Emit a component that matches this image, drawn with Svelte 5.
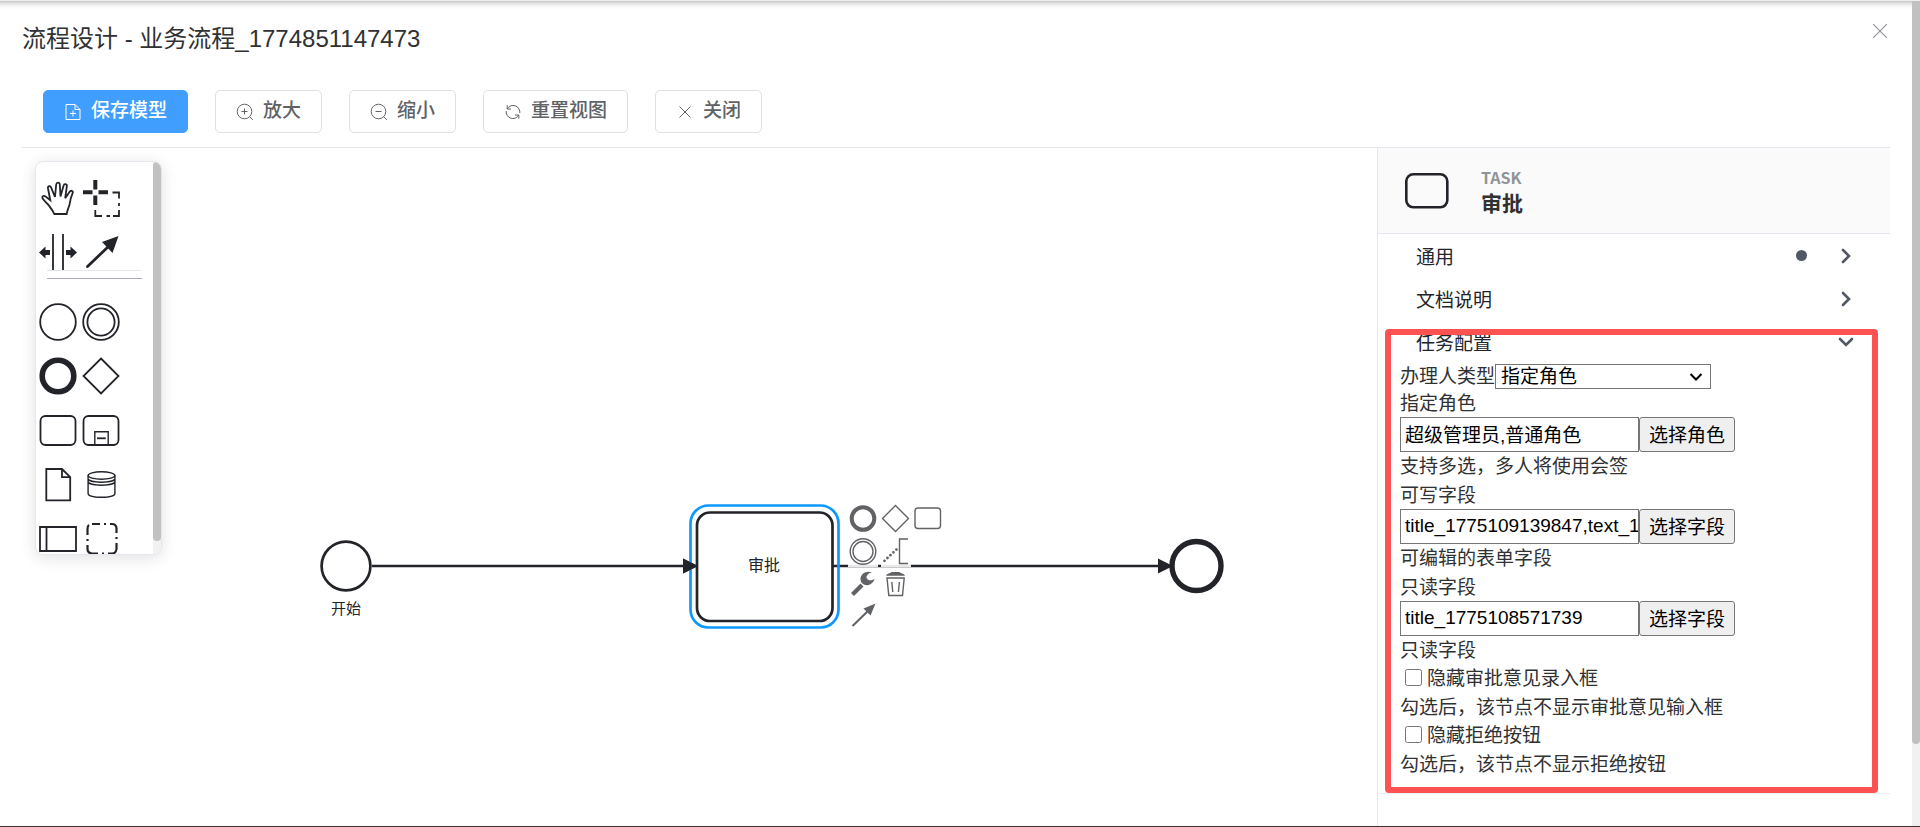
<script lang="ts">
    let assigneeType = $state('role');
    let roles = $state('超级管理员,普通角色');
    let writable = $state('title_1775109139847,text_1775109140522');
    let readonlyFields = $state('title_1775108571739');
    let hideComment = $state(false);
    let hideReject = $state(false);

    const scrollRatio = 90;

    const groups = [
        { title: '通用', edited: true },
        { title: '文档说明', edited: false }
    ];
</script>

<!-- Palette glyphs, all on a 38 x 38 grid -->
{#snippet glyph(name: string)}
    <svg viewBox="0 0 38 38" aria-hidden="true">
        {#if name === 'hand'}
            <path
                d="M15.3 35 C13.5 31 11 28 9.5 26 C7.5 24 4.5 21 3.4 19 C2.8 17 4.8 16.2 6.5 17.4 L11.3 21.3 L9 9.5 C8.6 6.8 11.4 6.2 12.2 8.6 L16 18 L17.2 5.5 C17.5 3 20.6 3 20.8 5.5 L21.5 17.5 L24.6 6.5 C25.3 4.4 28.2 4.9 27.8 7.4 L26.2 19.2 L30.8 12.6 C32.2 10.9 34.6 12 33.6 14.2 C32 18 31 22 30.4 26 C29.6 29 28.2 31 27.7 35 Z"
            />
        {:else if name === 'lasso'}
            <path class="thick" d="M1 13.3 H10.5 M16.5 13.3 H26 M13.3 1 V10.5 M13.3 16.5 V26" />
            <path d="M30.5 13.5 H37 V19.5 M37 24 V27 M37 31 V37 H31 M28 37 H24.5 M20 37 H13.3 V31" />
        {:else if name === 'space'}
            <path d="M14 1 V38 M24 1 V38" />
            <path class="solid" d="M0 19.5 L6.5 13.5 V17 H11 V22 H6.5 V25.5 Z M38 19.5 L31.5 13.5 V17 H27 V22 H31.5 V25.5 Z" />
        {:else if name === 'connect'}
            <path class="medium" d="M5.5 33.5 L28 12" />
            <path class="solid" d="M36.5 3 L20 9 L30.5 20 Z" />
        {:else if name === 'start'}
            <circle cx="19" cy="19" r="17.8" />
        {:else if name === 'intermediate'}
            <circle cx="19" cy="19" r="17.8" />
            <circle cx="19" cy="19" r="13.6" />
        {:else if name === 'end'}
            <circle class="heavy" cx="19" cy="19" r="15.8" />
        {:else if name === 'gateway'}
            <path d="M19 1.5 L36.5 19 L19 36.5 L1.5 19 Z" />
        {:else if name === 'task'}
            <rect x="1.5" y="5" width="35" height="29" rx="5" />
        {:else if name === 'subprocess'}
            <rect x="1.5" y="5" width="35" height="29" rx="5" />
            <path class="fine" d="M12.8 34 V20.8 H26.2 V34" />
            <path d="M15 27.3 H23.8" />
        {:else if name === 'data-object'}
            <path d="M7.3 4 H23 L31.2 12.2 V35.3 H7.3 Z M23 4 V12.2 H31.2" />
        {:else if name === 'data-store'}
            <g class="fine">
                <ellipse cx="19.5" cy="10.5" rx="13.4" ry="3.7" />
                <path
                    d="M6.1 10.5 V28.5 C6.1 33.5 32.9 33.5 32.9 28.5 V10.5 M6.1 13.5 C6.1 18.4 32.9 18.4 32.9 13.5 M6.1 16.5 C6.1 21.4 32.9 21.4 32.9 16.5"
                />
            </g>
        {:else if name === 'participant'}
            <path d="M1 8 H37 V32 H1 Z M7.5 8 V32" />
        {:else if name === 'group'}
            <path
                class="thicker"
                d="M10 5 H18 M22 5 H24 M28 5 H30 Q34 5 34.5 9 V14 M34.5 18 V20 M34.5 24 V30 Q34 34.5 30 34.5 H26 M22 34.5 H20 M16 34.5 H10 Q5.5 34 5.5 30 V26 M5.5 22 V20 M5.5 16 V10 Q5.5 7 7 6"
            />
        {/if}
    </svg>
{/snippet}

<div class="page">
    <main class="dialog">
        <header class="dialog-header">
            <h1>流程设计 - 业务流程_1774851147473</h1>
            <button class="dialog-close" aria-label="关闭对话框">
                <svg viewBox="0 0 14 14"><path d="M1 1 L13 13 M13 1 L1 13" /></svg>
            </button>
        </header>

        <div class="toolbar">
            <button class="btn primary">
                <svg viewBox="0 0 18 18">
                    <path d="M2 1.5 H11 L16 6.5 V16.5 H2 Z M11 1.5 V6.5 H16 M9 7.5 V13.5 M6 10.5 H12" />
                </svg>
                <span>保存模型</span>
            </button>
            <button class="btn">
                <svg viewBox="0 0 18 18">
                    <circle cx="8.5" cy="8.5" r="7.3" />
                    <path d="M8.5 5.5 V11.5 M5.5 8.5 H11.5 M13.8 13.8 L16.8 16.8" />
                </svg>
                <span>放大</span>
            </button>
            <button class="btn">
                <svg viewBox="0 0 18 18">
                    <circle cx="8.5" cy="8.5" r="7.3" />
                    <path d="M5.5 8.5 H11.5 M13.8 13.8 L16.8 16.8" />
                </svg>
                <span>缩小</span>
            </button>
            <button class="btn">
                <svg viewBox="0 0 18 18">
                    <path
                        d="M3.2 2.2 V6 H7 M3.2 6 C6 1 14 1 15.8 8 V10 M14.8 15.8 V12 H11 M14.8 12 C12 17 4 17 2.2 10 V8"
                    />
                </svg>
                <span>重置视图</span>
            </button>
            <button class="btn">
                <svg viewBox="0 0 18 18"><path d="M3.5 3.5 L14.5 14.5 M14.5 3.5 L3.5 14.5" /></svg>
                <span>关闭</span>
            </button>
        </div>

        <div class="designer">
            <section class="canvas">
                <svg class="diagram" aria-label="业务流程">
                    <g class="shape">
                        <circle cx="324" cy="418" r="24.4" />
                        <path d="M350 418 H668 M811 418 H1142" />
                        <path class="head" d="M661 410.5 L676 418 L661 425.5 Z M1136 410.5 L1151 418 L1136 425.5 Z" />
                        <rect class="selected" x="668.5" y="357.5" width="148" height="122" rx="18" />
                        <rect x="675" y="364.5" width="135.5" height="108.5" rx="13" />
                        <path class="head" d="M661 410.5 L676 418 L661 425.5 Z" />
                        <circle class="end" cx="1174.5" cy="418" r="24.5" />
                    </g>
                    <text class="label" x="324" y="466">开始</text>
                    <text class="name" x="742" y="423">审批</text>
                </svg>

                <div class="context-pad">
                    <button aria-label="追加结束事件">
                        <svg viewBox="0 0 30 30"><circle cx="15" cy="14.5" r="11.3" stroke-width="4" /></svg>
                    </button>
                    <button aria-label="追加网关">
                        <svg viewBox="0 0 30 30"><path d="M14.5 1.5 L27.5 14.5 L14.5 27.5 L1.5 14.5 Z" /></svg>
                    </button>
                    <button aria-label="追加任务">
                        <svg viewBox="0 0 30 30"><rect x="1" y="4" width="25.5" height="20.5" rx="3" /></svg>
                    </button>
                    <button aria-label="追加中间事件">
                        <svg viewBox="0 0 30 30">
                            <circle cx="15" cy="14.5" r="12.8" />
                            <circle cx="15" cy="14.5" r="10" />
                        </svg>
                    </button>
                    <button aria-label="追加注释">
                        <svg viewBox="0 0 30 30">
                            <path d="M27 2 H18.5 V26.5 H27" />
                            <path d="M3.5 23.8 L16 12" stroke-width="2.8" stroke-linecap="round" stroke-dasharray="0 4.1" />
                        </svg>
                    </button>
                    <button class="row-start" aria-label="更改类型">
                        <svg viewBox="0 0 30 30">
                            <path d="M4.5 24.5 L14 15" stroke-width="4.2" />
                            <path
                                class="solid"
                                d="M24 2.5 C18.5 -.2 12 4 12.5 9.5 C13 14.5 18 16.3 22 14.4 C24.5 13.2 26 11.5 26.6 8.8 C24 10.8 20 11 18.6 8 C18 5.5 20.5 3 24 2.5 Z"
                            />
                        </svg>
                    </button>
                    <button aria-label="删除">
                        <svg viewBox="0 0 30 30">
                            <path
                                class="solid"
                                d="M5 5.8 C6 3.2 9 3.8 10.5 2 H18.5 C20 3.8 23 3.2 24 5.8 Z"
                            />
                            <path d="M6 8 H23.2 L21.5 25.5 H7.8 Z M10.8 12 L11.8 22 M18.4 12 L17.4 22" />
                        </svg>
                    </button>
                    <button class="row-start" aria-label="连接">
                        <svg viewBox="0 0 30 30">
                            <path d="M4.5 23 L20 8" stroke-width="2" />
                            <path class="solid" d="M27.5 .5 L15.5 5.5 L22.5 12.5 Z" />
                        </svg>
                    </button>
                </div>

                <nav class="palette" aria-label="工具面板">
                    <div class="entries">
                        {#each ['hand', 'lasso', 'space', 'connect'] as name}
                            <button aria-label={name}>{@render glyph(name)}</button>
                        {/each}
                        <hr />
                        {#each ['start', 'intermediate', 'end', 'gateway', 'task', 'subprocess', 'data-object', 'data-store', 'participant', 'group'] as name}
                            <button aria-label={name}>{@render glyph(name)}</button>
                        {/each}
                    </div>
                    <div class="palette-track"><div class="thumb"></div></div>
                </nav>
            </section>

            <aside class="properties">
                <header class="element">
                    <svg viewBox="0 0 44 36"><rect x="1.3" y="1.3" width="41" height="33" rx="7" /></svg>
                    <div>
                        <div class="type">TASK</div>
                        <div class="element-name">审批</div>
                    </div>
                </header>

                {#each groups as group}
                    <button class="group-header">
                        <span>{group.title}</span>
                        {#if group.edited}<i class="dot"></i>{/if}
                        <svg viewBox="0 0 16 16"><path d="M5 2 L11 8 L5 14" /></svg>
                    </button>
                {/each}

                <button class="group-header" aria-expanded="true">
                    <span>任务配置</span>
                    <svg viewBox="0 0 16 16"><path d="M2 5 L8 11 L14 5" /></svg>
                </button>

                <div class="fields">
                    <div class="row">
                        <label for="assignee-type">办理人类型</label>
                        <select id="assignee-type" bind:value={assigneeType}>
                            <option value="role">指定角色</option>
                            <option value="user">指定用户</option>
                        </select>
                    </div>

                    <label class="line" for="roles">指定角色</label>
                    <div class="row">
                        <input id="roles" type="text" bind:value={roles} />
                        <button class="pick">选择角色</button>
                    </div>
                    <p class="hint">支持多选，多人将使用会签</p>

                    <label class="line" for="writable">可写字段</label>
                    <div class="row">
                        <input id="writable" type="text" bind:value={writable} />
                        <button class="pick">选择字段</button>
                    </div>
                    <p class="hint">可编辑的表单字段</p>

                    <label class="line" for="readonly">只读字段</label>
                    <div class="row">
                        <input id="readonly" type="text" bind:value={readonlyFields} />
                        <button class="pick">选择字段</button>
                    </div>
                    <p class="hint">只读字段</p>

                    <label class="check"><input type="checkbox" bind:checked={hideComment} />隐藏审批意见录入框</label>
                    <p class="hint">勾选后，该节点不显示审批意见输入框</p>
                    <label class="check"><input type="checkbox" bind:checked={hideReject} />隐藏拒绝按钮</label>
                    <p class="hint">勾选后，该节点不显示拒绝按钮</p>
                </div>

                <!-- Red frame around the task settings -->
                <div class="highlight"></div>
            </aside>
        </div>
    </main>

    <div class="page-track"><div class="thumb" style="height: {scrollRatio}%"></div></div>
</div>

<style>
    :global(body) {
        background: #fff;
        overflow: hidden;
    }

    .page {
        box-sizing: border-box;
        display: flex;
        height: 100vh;
        border-top: 1px solid #eceeed;
        border-bottom: 1px solid #3f302f;
        background: linear-gradient(#c6c8c7, #e8e8e8 3px, #fafafa 6px, #fff 9px);
        color: #303133;
        font-family: 'Liberation Sans', 'Noto Sans CJK SC', sans-serif;
        font-size: 19px;
    }

    button,
    input,
    select {
        box-sizing: border-box;
        margin: 0;
        font: inherit;
    }

    svg {
        fill: none;
        stroke: currentColor;
    }

    .dialog {
        flex: 1;
        min-width: 0;
        display: flex;
        flex-direction: column;
        padding: 0 22px;
    }

    .dialog-header {
        display: flex;
        justify-content: space-between;
        align-items: flex-start;
        padding-top: 22px;
    }

    h1 {
        margin: 0;
        font-size: 24px;
        line-height: 32px;
        font-weight: 400;
    }

    .dialog-close {
        display: flex;
        padding: 0 2px;
        border: 0;
        background: none;
        color: #909399;
    }

    .dialog-close svg {
        width: 16px;
        height: 16px;
    }

    .toolbar {
        display: flex;
        gap: 27px;
        padding: 35px 21px 14px;
        border-bottom: 1px solid #e4e7ed;
    }

    .btn {
        display: flex;
        align-items: center;
        gap: 9px;
        height: 43px;
        padding: 0 20px;
        border: 1px solid #dcdfe6;
        border-radius: 5px;
        background: #fff;
        color: #606266;
        font-weight: 500;
        line-height: 24px;
    }

    .btn span {
        padding-bottom: 2px;
    }

    .btn svg {
        width: 18px;
        height: 18px;
    }

    .btn.primary {
        border-color: #409eff;
        background: #409eff;
        color: #fff;
    }

    .designer {
        flex: 1;
        min-height: 0;
        display: grid;
        grid-template-columns: 1fr 513px;
    }

    .canvas {
        position: relative;
        overflow: hidden;
        padding: 13px;
    }

    .diagram {
        position: absolute;
        inset: 0;
        width: 100%;
        height: 100%;
        color: #22242a;
    }

    .shape {
        stroke-width: 2.7;
    }

    .shape circle,
    .shape rect {
        fill: #fff;
    }

    .shape .head {
        fill: currentColor;
        stroke: none;
    }

    .shape .end {
        stroke-width: 5.4;
    }

    .shape .selected {
        fill: none;
        stroke: #0d99ff;
    }

    .diagram text {
        fill: #22242a;
        stroke: none;
        text-anchor: middle;
    }

    .diagram .label {
        font-size: 15px;
    }

    .diagram .name {
        font-size: 16px;
    }

    .context-pad {
        position: absolute;
        left: 826px;
        top: 356px;
        display: grid;
        grid-template-columns: repeat(3, 30px);
        gap: 3px;
    }

    .context-pad button {
        height: 30px;
        padding: 0;
        border: 0;
        background: rgba(255, 255, 255, 0.9);
        color: #606266;
    }

    .context-pad svg {
        display: block;
        width: 30px;
        height: 30px;
        stroke-width: 1.4;
    }

    .row-start {
        grid-column: 1;
    }

    .solid {
        fill: currentColor;
        stroke: none;
    }

    .palette {
        position: relative;
        box-sizing: border-box;
        display: flex;
        width: 127px;
        height: 394px;
        overflow: hidden;
        border: 1px solid #e4e7ed;
        border-radius: 8px;
        background: #fff;
        box-shadow: 0 3px 16px rgba(0, 0, 0, 0.12);
        color: #22242a;
    }

    .entries {
        flex: 1;
        display: grid;
        grid-template-columns: 38px 38px;
        grid-auto-rows: max-content;
        gap: 16px 5px;
        padding: 17px 0 0 3px;
    }

    .entries button {
        padding: 0;
        border: 0;
        background: none;
        color: inherit;
    }

    .entries svg {
        display: block;
        width: 38px;
        height: 38px;
        stroke-width: 1.8;
    }

    .entries hr {
        grid-column: 1 / -1;
        box-sizing: border-box;
        width: 95px;
        height: 9px;
        margin: -17px 0 2px 8px;
        border: solid;
        border-width: 1px 0;
        border-color: #e4e7ed transparent #a8abc0;
    }

    .entries .fine {
        stroke-width: 1.4;
    }

    .entries .medium {
        stroke-width: 2.8;
        stroke-linecap: round;
    }

    .entries .thicker {
        stroke-width: 2.2;
    }

    .entries .thick {
        stroke-width: 4;
    }

    .entries .heavy {
        stroke-width: 5.6;
    }

    .palette-track {
        width: 8px;
        background: #f1f1f1;
    }

    .thumb {
        border-radius: 0 0 4px 4px;
        background: #c1c1c1;
    }

    .palette-track .thumb {
        height: 379px;
        border-radius: 4px;
    }

    .page-track {
        width: 8px;
        background: #f1f1f1;
    }

    .properties {
        position: relative;
        border-left: 1px solid #e4e7ed;
        min-width: 0;
    }

    .element {
        display: flex;
        align-items: center;
        gap: 32px;
        height: 85px;
        padding-left: 27px;
        border-bottom: 1px solid #e4e7ed;
        background: #fafafa;
    }

    .element svg {
        width: 44px;
        height: 36px;
        stroke: #22242a;
        stroke-width: 2.6;
    }

    .type {
        padding-top: 2px;
        color: #909399;
        font: 700 16px/22px 'Noto Sans CJK SC', sans-serif;
    }

    .element-name {
        padding-top: 2px;
        font-size: 21px;
        line-height: 28px;
        font-weight: 700;
    }

    .group-header {
        display: flex;
        align-items: center;
        width: 100%;
        height: 43px;
        padding: 0 36px 0 38px;
        border: 0;
        background: none;
        color: #22242a;
        font-family: 'Noto Sans CJK SC', sans-serif;
        line-height: 28px;
        text-align: left;
    }

    .group-header span {
        flex: 1;
        padding-top: 1px;
    }

    .group-header svg {
        width: 16px;
        height: 16px;
        stroke: #525866;
        stroke-width: 2.6;
        stroke-linecap: round;
    }

    .dot {
        width: 11px;
        height: 11px;
        margin-right: 31px;
        border-radius: 50%;
        background: #525866;
    }

    .fields {
        padding: 1px 22px 14px;
        border-bottom: 1px solid #ebeef5;
    }

    .row {
        display: flex;
        align-items: center;
    }

    .row label {
        line-height: 20px;
    }

    .line,
    .check {
        display: block;
        height: 28px;
        line-height: 30px;
    }

    .hint {
        margin: 0;
        height: 29px;
        line-height: 30px;
    }

    select {
        width: 216px;
        height: 25px;
        padding: 0 5px;
        border: 1px solid #767676;
        border-radius: 0;
        appearance: none;
        background: #fff
            url("data:image/svg+xml,%3Csvg xmlns='http://www.w3.org/2000/svg' width='14' height='10' fill='none' stroke='black' stroke-width='2'%3E%3Cpath d='M1.5 2L7 7.5L12.5 2'/%3E%3C/svg%3E")
            no-repeat right 7px center;
        color: #000;
    }

    input[type='text'] {
        width: 239px;
        height: 35px;
        padding: 0 0 2px 4px;
        border: 1px solid #767676;
        border-radius: 0;
        background: #fff;
        color: #000;
    }

    .pick {
        height: 35px;
        width: 96px;
        padding: 0 0 3px;
        border: 1px solid #767676;
        border-radius: 3px;
        background: #efefef;
        color: #000;
    }

    .check {
        display: flex;
        align-items: center;
    }

    .check input {
        width: 17px;
        height: 17px;
        margin: 0 5px 4px;
    }

    .highlight {
        position: absolute;
        inset: 181px 12px auto 7px;
        box-sizing: border-box;
        height: 464px;
        border: 6px solid #fc5252;
        border-radius: 4px;
        pointer-events: none;
    }
</style>
